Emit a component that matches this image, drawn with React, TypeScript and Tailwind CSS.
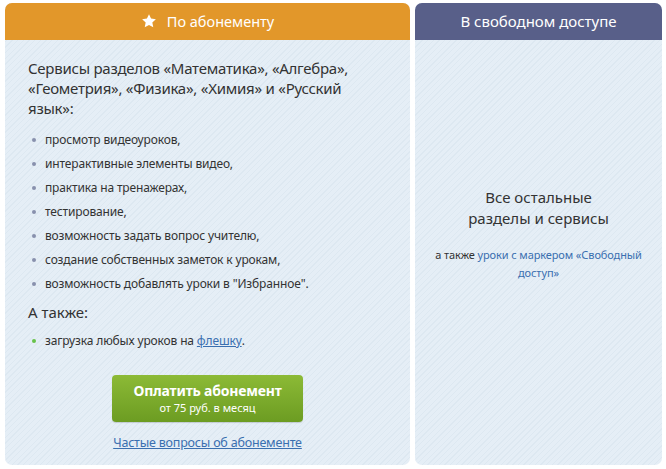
import React from "react";

const stripe =
  "bg-[repeating-linear-gradient(135deg,#e5eef6_0px,#e5eef6_3px,#dde8f1_3px,#dde8f1_4px)]";

function Star() {
  return (
    <svg width="16" height="16" viewBox="0 0 24 24" className="mr-[10px] mt-[-1px]">
      <path
        d="M12 1.8l3.1 6.6 7.2.9-5.3 5 1.4 7.1L12 17.9l-6.4 3.5 1.4-7.1-5.3-5 7.2-.9z"
        fill="#fff"
      />
    </svg>
  );
}

const items = [
  "просмотр видеоуроков,",
  "интерактивные элементы видео,",
  "практика на тренажерах,",
  "тестирование,",
  "возможность задать вопрос учителю,",
  "создание собственных заметок к урокам,",
  "возможность добавлять уроки в \"Избранное\".",
];

export default function App() {
  return (
    <div
      className="w-[666px] h-[469px] bg-white flex gap-[5px] pl-[5px] pr-[4px] pt-[3px] pb-[4px] text-[#333]"
      style={{ fontFamily: '"Noto Sans", Arial, sans-serif' }}
    >
      <div className={`w-[405px] flex flex-col rounded-[7px] overflow-hidden ${stripe}`}>
        <div className="h-[37px] bg-[#e2972a] flex items-center justify-center text-white text-[14.5px]">
          <Star />
          <span>По абонементу</span>
        </div>
        <div className="flex flex-col pl-[23px] pr-[12px] pt-[18px]">
          <p className="w-[326px] text-[15px] tracking-[-0.25px] leading-[20px]">
            Сервисы разделов «Математика», «Алгебра», «Геометрия», «Физика», «Химия» и «Русский язык»:
          </p>
          <ul className="mt-[10px] flex flex-col">
            {items.map((t) => (
              <li key={t} className="flex items-center h-[24px] text-[12px] tracking-[-0.15px]">
                <span className="w-[4px] h-[4px] rounded-full bg-[#8890ad] ml-[4px] mr-[9px]" />
                {t}
              </li>
            ))}
          </ul>
          <p className="mt-[6px] text-[15px] leading-[20px]">А также:</p>
          <div className="mt-[7px] flex items-center h-[24px] text-[12px] tracking-[-0.15px]">
            <span className="w-[4px] h-[4px] rounded-full bg-[#67c24a] ml-[4px] mr-[9px]" />
            загрузка любых уроков на&nbsp;
            <a className="text-[#3a6fb0] underline">флешку</a>.
          </div>
          <div className="flex flex-col items-center mr-[11px]">
            <button className="mt-[22px] w-[191px] h-[47px] rounded-[4px] bg-[linear-gradient(#8cba36,#6c9c22)] text-white flex flex-col items-center justify-center shadow-[0_1px_1px_rgba(0,0,0,0.15)]">
              <span className="text-[14px] font-bold leading-[18px] tracking-[-0.2px]">Оплатить абонемент</span>
              <span className="text-[11px] leading-[15px]">от 75 руб. в месяц</span>
            </button>
            <a className="mt-[12px] text-[12.5px] tracking-[-0.2px] text-[#3a6fb0] underline">
              Частые вопросы об абонементе
            </a>
          </div>
        </div>
      </div>
      <div className={`flex-1 flex flex-col rounded-[7px] overflow-hidden ${stripe}`}>
        <div className="h-[37px] bg-[#585f89] flex items-center justify-center text-white text-[15px]">
          В свободном доступе
        </div>
        <div className="flex flex-col items-center text-center pt-[147px]">
          <p className="text-[15px] leading-[21px]">
            Все остальные
            <br />
            разделы и сервисы
          </p>
          <p className="mt-[17px] text-[11px] leading-[18px] px-[6px] tracking-[-0.1px]">
            а также <span className="text-[#3a6fb0]">уроки с маркером «Свободный доступ»</span>
          </p>
        </div>
      </div>
    </div>
  );
}
